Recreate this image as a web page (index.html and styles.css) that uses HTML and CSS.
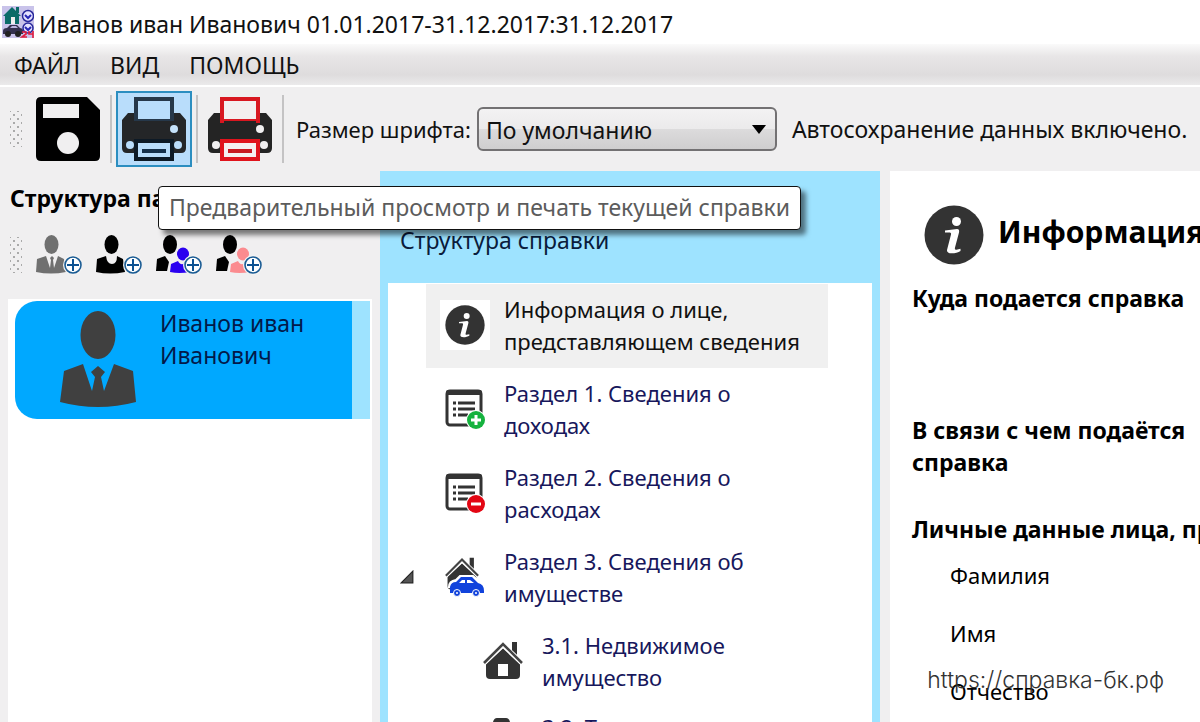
FILE: index.html
```
<!DOCTYPE html>
<html lang="ru">
<head>
  <meta charset="UTF-8">
  <meta name="viewport" content="width=device-width, initial-scale=1.0">
  <title>Справка БК</title>
  <link rel="stylesheet" href="styles.css">
</head>
<body>

<!-- общие значки -->
<svg class="defs" aria-hidden="true">
  <symbol id="i-info" viewBox="0 0 60 60">
    <circle cx="30" cy="30" r="29.500" fill="#333"/>
    <circle cx="32.500" cy="16.500" r="4.500" fill="#fff"/>
    <path d="M21 25.500l12-1.500c2 0 2.500 1.500 2 3.500l-4 15c-.4 1.700 0 2.500 1.500 2.200l4-1v2.300c-4 2.500-14 4-13.500-1l4-15.500c.4-1.600-.5-2-2-2h-4z" fill="#fff"/>
  </symbol>
  <symbol id="i-plus" viewBox="0 0 20 20">
    <circle cx="10" cy="10" r="10" fill="#f3f3f3"/>
    <circle cx="10" cy="10" r="8" fill="#fff" stroke="#1b5c94" stroke-width="1.600"/>
    <path d="M10 4v12M4 10h12" stroke="#0d5292" stroke-width="2"/>
  </symbol>
  <symbol id="i-home" viewBox="0 0 40 40">
    <path d="M29 1h5v14l-5-5z"/>
    <path d="M3 23L20 7l17 16v11q0 4-4 4H7q-4 0-4-4z"/>
    <path d="M1 22L20 4l19 18" fill="none" stroke="#fff" stroke-width="5"/>
    <path d="M1 22L20 3l19 19" fill="none" stroke="#444" stroke-width="2.600"/>
  </symbol>
  <symbol id="i-list" viewBox="0 0 40 40">
    <rect x="2" y="2" width="34" height="34" rx="3" fill="#fff" stroke="#333" stroke-width="3"/>
    <path d="M3 1h32q2 0 2 2v3H1V3q0-2 2-2z" fill="#333"/>
    <path d="M8 14h3M8 20h3M8 26h3M13 14h17M13 20h17M13 26h10" stroke="#333" stroke-width="3"/>
  </symbol>
</svg>

<div class="app">
  <header class="titlebar">
    <svg class="logo" viewBox="0 0 32 32" aria-hidden="true">
      <rect width="32" height="32" fill="#c9c3ea"/>
      <path d="M1 10L10 1l9 9h-2v8H3v-8z" fill="#0b6b68"/>
      <path d="M14 1h3v6h-3z" fill="#0b6b68"/>
      <path d="M9 11h4v7H9z" fill="#eee"/>
      <path d="M1 28v-3q0-3 4-3l3-3h7l3 3q4 0 3 6z" fill="#34314f"/>
      <path d="M8 22l2-2h4l2 2z" fill="#b9b4df"/>
      <circle cx="6" cy="28" r="3" fill="#222"/><circle cx="16" cy="28" r="3" fill="#222"/>
      <circle cx="26" cy="10" r="5.500" fill="#e5e2ff" stroke="#28289a" stroke-width="1.500"/>
      <path d="M23 9l3 3 3-3" fill="none" stroke="#2727b5" stroke-width="2"/>
      <circle cx="26" cy="22" r="5" fill="#e5e2ff" stroke="#28289a" stroke-width="1.500"/>
      <path d="M23 21l3 3 3-3" fill="none" stroke="#2727b5" stroke-width="2"/>
      <path d="M20 26h4v2l-4 3h5M27 25v3h4v-3 7" fill="none" stroke="#e11d3f" stroke-width="1.600"/>
    </svg>
    <span class="window-title">Иванов иван Иванович 01.01.2017-31.12.2017:31.12.2017</span>
  </header>

  <nav class="menubar">
    <button class="menu-item">ФАЙЛ</button>
    <button class="menu-item">ВИД</button>
    <button class="menu-item">ПОМОЩЬ</button>
  </nav>

  <div class="toolbar">
    <span class="grip"></span>
    <button class="tool-btn" aria-label="Сохранить">
      <svg class="tool-icon" viewBox="0 0 64 64">
        <path d="M5 0h46l13 13v46q0 5-5 5H5q-5 0-5-5V5q0-5 5-5z"/>
        <path d="M7 7h36v14H7z" fill="#f0eff0"/>
        <circle cx="32" cy="46" r="11" fill="#f0eff0"/>
      </svg>
    </button>
    <span class="sep"></span>
    <div class="tool-wrap">
      <button class="tool-btn active" aria-label="Печать" aria-describedby="tip">
        <svg class="tool-icon" viewBox="0 0 64 64">
          <path d="M6 16h52l6 7v28q0 5-5 5H5q-5 0-5-5V23z" fill="#242628"/>
          <path d="M14 24V2h36v22z" fill="#b9ddfb" stroke="#26384a" stroke-width="4"/>
          <path d="M10 24h44v14H10z" fill="#242628"/>
          <circle cx="52" cy="32" r="4" fill="#c5e2fa"/>
          <circle cx="8" cy="48" r="4" fill="#b9ddfb"/><circle cx="56" cy="48" r="4" fill="#b9ddfb"/>
          <path d="M14 44h36v18H14z" fill="#b9ddfb" stroke="#0d1a26" stroke-width="4"/>
          <path d="M20 54h24" stroke="#15304a" stroke-width="4"/>
        </svg>
      </button>
      <div class="tooltip" id="tip" role="tooltip">Предварительный просмотр и печать текущей справки</div>
    </div>
    <span class="sep"></span>
    <button class="tool-btn" aria-label="Печать всех справок">
      <svg class="tool-icon" viewBox="0 0 64 64">
        <path d="M6 16h52l6 7v28q0 5-5 5H5q-5 0-5-5V23z" fill="#242424"/>
        <path d="M14 24V2h36v22z" fill="#f3efef" stroke="#d81720" stroke-width="4"/>
        <path d="M16 24h32v14H16z" fill="#242424"/>
        <circle cx="52" cy="32" r="4" fill="#f0eff0"/>
        <circle cx="8" cy="48" r="4" fill="#f0eff0"/><circle cx="56" cy="48" r="4" fill="#f0eff0"/>
        <path d="M14 44h36v18H14z" fill="#f5efef" stroke="#e0131c" stroke-width="4"/>
        <path d="M20 54h24" stroke="#c81820" stroke-width="4"/>
      </svg>
    </button>
    <span class="sep"></span>
    <label class="size-label" for="fontSize">Размер шрифта:</label>
    <div class="select-wrap">
      <select class="size-select" id="fontSize">
        <option>По умолчанию</option>
      </select>
      <svg class="select-arrow" viewBox="0 0 14 9" aria-hidden="true"><path d="M0 0h14L7 9z"/></svg>
    </div>
    <span class="autosave">Автосохранение данных включено.</span>
  </div>

  <main class="panels">
    <section class="folder">
      <h2 class="folder-title">Структура папки</h2>
      <div class="folder-tools">
        <span class="grip small"></span>
        <button class="person-btn" aria-label="Добавить заявителя">
          <svg viewBox="0 0 46 40">
            <g fill="#707070">
              <ellipse cx="15.500" cy="9.500" rx="7" ry="9.500"/>
              <path d="M1 24l9-3 4 12 1-8-1-2 2-2 2 2-1 2 1 8 4-12 6 3 2 13q-15 3-30 0z"/>
            </g>
            <use href="#i-plus" x="27" y="20" width="20" height="20"/>
          </svg>
        </button>
        <button class="person-btn" aria-label="Добавить супругу">
          <svg viewBox="0 0 46 40">
            <ellipse cx="15.500" cy="9.500" rx="7" ry="9.500"/>
            <path d="M1 24l9-3q1 8 6 8t5-8l6 3 2 13q-15 3-29 0z"/>
            <use href="#i-plus" x="27" y="20" width="20" height="20"/>
          </svg>
        </button>
        <button class="person-btn" aria-label="Добавить сына">
          <svg viewBox="0 0 46 40">
            <ellipse cx="14" cy="9.500" rx="7" ry="9.500"/>
            <path d="M1 24l8-3 4 6-2 9H0z"/>
            <g fill="#2a00f0">
              <ellipse cx="27" cy="19" rx="6" ry="6.500"/>
              <path d="M15 29l7-3q2 5 8 2l4 9q-11 2-20 0z"/>
            </g>
            <use href="#i-plus" x="27" y="20" width="20" height="20"/>
          </svg>
        </button>
        <button class="person-btn" aria-label="Добавить дочь">
          <svg viewBox="0 0 46 40">
            <ellipse cx="14" cy="9.500" rx="7" ry="9.500"/>
            <path d="M1 24l8-3 4 6-2 9H0z"/>
            <g fill="#fb8b8f">
              <ellipse cx="27" cy="19" rx="6" ry="6.500"/>
              <path d="M15 29l7-3q2 5 8 2l4 9q-11 2-20 0z"/>
            </g>
            <use href="#i-plus" x="27" y="20" width="20" height="20"/>
          </svg>
        </button>
      </div>
      <div class="folder-list">
        <div class="person-card">
          <svg class="person-photo" viewBox="0 0 76 96" aria-hidden="true">
            <g fill="#404040">
              <ellipse cx="38" cy="24" rx="17.500" ry="24"/>
              <path d="M4 60l19-7 9 27 3-14-4-5 7-6 7 6-4 5 3 14 10-27 19 7 3 31q-38 10-76 0z"/>
            </g>
          </svg>
          <span class="person-name">Иванов иван Иванович</span>
        </div>
      </div>
    </section>

    <section class="report">
      <h2 class="report-title">Структура справки</h2>
      <ul class="tree">
        <li class="tree-item selected">
          <span class="tree-icon boxed"><svg viewBox="0 0 60 60"><use href="#i-info"/></svg></span>
          <span>Информация о лице,<br>представляющем сведения</span>
        </li>
        <li class="tree-item">
          <span class="tree-icon">
            <svg viewBox="0 0 40 40">
              <use href="#i-list"/>
              <circle cx="31" cy="31" r="10" fill="#fff"/>
              <circle cx="31" cy="31" r="9" fill="#15b23e"/>
              <path d="M31 26v10M26 31h10" stroke="#fff" stroke-width="3"/>
            </svg>
          </span>
          <span>Раздел 1. Сведения о<br>доходах</span>
        </li>
        <li class="tree-item">
          <span class="tree-icon">
            <svg viewBox="0 0 40 40">
              <use href="#i-list"/>
              <circle cx="31" cy="31" r="10" fill="#fff"/>
              <circle cx="31" cy="31" r="9" fill="#e30613"/>
              <path d="M26 31h10" stroke="#fff" stroke-width="3"/>
            </svg>
          </span>
          <span>Раздел 2. Сведения о<br>расходах</span>
        </li>
        <li class="tree-item">
          <svg class="expander" viewBox="0 0 12 12" aria-hidden="true"><path d="M1 11L11 1v10z" fill="#555" stroke="#222"/></svg>
          <span class="tree-icon">
            <svg viewBox="0 0 40 40">
              <g fill="#333"><use href="#i-home" x="0" y="0" width="34" height="34"/></g>
              <path d="M4 30q0-6 7-7l4-4h13l6 5q6 1 6 9z" fill="#fff" stroke="#fff" stroke-width="2"/>
              <path d="M5 36v-6q1-5 6-5l5-5h11l6 6q6 1 6 8v2z" fill="#1143dc"/>
              <path d="M14 26l3-3h3v3zM22 23h3l4 3h-7z" fill="#fff"/>
              <circle cx="12" cy="36" r="3.500" fill="#1143dc" stroke="#fff"/>
              <circle cx="31" cy="36" r="3.500" fill="#1143dc" stroke="#fff"/>
              <circle cx="12" cy="36" r="1" fill="#fff"/><circle cx="31" cy="36" r="1" fill="#fff"/>
            </svg>
          </span>
          <span>Раздел 3. Сведения об<br>имуществе</span>
        </li>
        <li class="tree-item sub">
          <span class="tree-icon">
            <svg viewBox="0 0 40 40">
              <g fill="#333"><use href="#i-home"/></g>
              <path d="M15 23h10v12H15z" fill="#fff"/>
            </svg>
          </span>
          <span>3.1. Недвижимое<br>имущество</span>
        </li>
        <li class="tree-item sub">
          <span class="tree-icon tall">
            <svg viewBox="0 0 40 50">
              <path d="M3 40V20l7-16q1-4 4-4h9q3 0 4 4l8 16v20z" fill="#333"/>
              <path d="M8 18l5-11h12l5 11z" fill="#fff"/>
            </svg>
          </span>
          <span>3.2. Транспортные<br>средства</span>
        </li>
      </ul>
    </section>

    <section class="details">
      <div class="details-head">
        <svg class="details-icon" viewBox="0 0 60 60" aria-hidden="true"><use href="#i-info"/></svg>
        <h1 class="details-title">Информация</h1>
      </div>
      <h3 class="question">Куда подается справка</h3>
      <h3 class="question reason">В связи с чем подаётся<br>справка</h3>
      <h3 class="question personal">Личные данные лица, представляющего сведения</h3>
      <p class="field">Фамилия</p>
      <p class="field">Имя</p>
      <p class="field">Отчество</p>
    </section>
  </main>

  <a class="site-link" href="https://справка-бк.рф">https://справка-бк.рф</a>
</div>

</body>
</html>
```
FILE: styles.css
```
* {
  box-sizing: border-box;
}

body {
  margin: 0;
  font-family: "Noto Sans", "Open Sans", sans-serif;
  font-size: 23px;
  line-height: 32px;
  color: #111;
  background: #f0eff0;
}

button, select {
  font: inherit;
  color: inherit;
}

button {
  border: none;
  background: none;
  padding: 0;
}

h1, h2, h3, p, ul {
  margin: 0;
  padding: 0;
}

svg {
  display: block;
}

.defs {
  position: absolute;
  width: 0;
  height: 0;
}

.app {
  position: relative;
  display: flex;
  flex-direction: column;
  height: 100vh;
  overflow: hidden;
  white-space: nowrap;
}

/* заголовок и меню */
.titlebar {
  display: flex;
  gap: 5px;
  padding: 6px 2px 4px;
  background: #fff;
}

.logo {
  width: 32px;
  height: 32px;
}

.window-title {
  padding-top: 2px;
}

.menubar {
  display: flex;
  gap: 30px;
  padding: 5px 14px 4px;
  border-bottom: 2px solid #fff;
  background: linear-gradient(#fafafa, #e8e6e7 30%, #dedcdd 75%, #ebeaeb);
}

/* панель инструментов */
.toolbar {
  display: flex;
  align-items: center;
  height: 84px;
  padding-left: 10px;
  flex-shrink: 0;
}

.grip {
  width: 12px;
  height: 36px;
  margin-right: 8px;
  background-image: radial-gradient(circle, #aaa 1px, transparent 1px), radial-gradient(circle, #aaa 1px, transparent 1px);
  background-size: 8px 8px;
  background-position: 0 0, 4px 4px;
}

.tool-btn {
  padding: 4px;
  border: 2px solid transparent;
}

.tool-btn.active {
  border-color: #2c8ec0;
  background: #b9ddfb;
}

.tool-icon {
  width: 64px;
  height: 64px;
}

.tool-wrap {
  position: relative;
}

.sep {
  width: 2px;
  height: 68px;
  margin: 0 4px;
  background: #c4c3c4;
}

.tooltip {
  position: absolute;
  z-index: 5;
  left: 42px;
  top: 95px;
  padding: 4px 10px 6px;
  border: 1px solid #111;
  border-radius: 4px;
  background: #fff;
  color: #5c5c5c;
  box-shadow: 5px 5px 5px rgba(0, 0, 0, 0.5);
}

.size-label {
  margin-left: 8px;
  font-size: 22px;
}

.select-wrap {
  position: relative;
  width: 300px;
  margin: 0 15px 0 6px;
}

.size-select {
  appearance: none;
  display: block;
  width: 100%;
  height: 44px;
  padding: 2px 7px 0;
  border: 2px solid #737173;
  border-radius: 6px;
  background: linear-gradient(#f3f2f3, #ebeaeb 50%, #dcdbdc 51%, #cfcecf);
}

.select-arrow {
  position: absolute;
  right: 11px;
  top: 18px;
  width: 14px;
  height: 9px;
}

/* три колонки */
.panels {
  flex: 1;
  min-height: 0;
  display: grid;
  grid-template-columns: 372px 500px 1fr;
  column-gap: 8px;
}

.folder {
  display: flex;
  flex-direction: column;
  min-height: 0;
}

.folder-title {
  padding: 11px 10px 21px;
  font-size: 23px;
  color: #000;
}

.folder-tools {
  display: flex;
  align-items: center;
  gap: 14px;
  height: 40px;
  padding-left: 10px;
}

.grip.small {
  margin-right: 0;
}

.person-btn svg {
  width: 46px;
  height: 40px;
}

.folder-list {
  flex: 1;
  margin: 24px 0 0 8px;
  padding: 2px 2px 0 7px;
  background: #fff;
}

.person-card {
  display: flex;
  gap: 24px;
  height: 118px;
  padding: 6px 18px 0 45px;
  border-right: 18px solid #9ee3ff;
  border-radius: 22px 0 0 22px;
  background: #00a8ff;
  color: #03194a;
}

.person-photo {
  width: 76px;
  height: 96px;
  margin-top: 4px;
  flex-shrink: 0;
}

.person-name {
  white-space: normal;
}

.report {
  display: flex;
  flex-direction: column;
  min-height: 0;
  padding: 0 8px;
  background: #9ee3ff;
}

.report-title {
  padding: 53px 12px 27px;
  font-size: 23px;
  font-weight: normal;
  color: #0a1c3c;
}

.tree {
  flex: 1;
  min-height: 0;
  overflow: hidden;
  padding: 1px 44px 0 38px;
  background: #fff;
  font-size: 22px;
  list-style: none;
}

.tree-item {
  position: relative;
  display: flex;
  gap: 14px;
  padding: 9px 14px 11px;
  color: #17175c;
}

.tree-item.selected {
  background: #f0f0f0;
  color: #111;
}

.tree-item.sub {
  padding: 9px 14px 9px 52px;
}

.tree-icon {
  display: flex;
  align-items: center;
  justify-content: center;
  width: 50px;
  height: 50px;
  margin-top: 7px;
  flex-shrink: 0;
}

.tree-icon.boxed {
  background: #fff;
}

.tree-icon svg {
  width: 40px;
  height: 40px;
}

.tree-icon.tall svg {
  height: 50px;
}

.expander {
  position: absolute;
  left: -26px;
  top: 34px;
  width: 14px;
  height: 14px;
}

.details {
  min-width: 0;
  margin-left: 2px;
  padding: 34px 0 0 22px;
  overflow: hidden;
  background: #fff;
  color: #000;
}

.details-head {
  display: flex;
  gap: 14px;
  margin: 0 0 17px 12px;
}

.details-icon {
  width: 60px;
  height: 60px;
  flex-shrink: 0;
}

.details-title {
  padding-top: 7px;
  font-size: 30px;
  line-height: 40px;
}

.question {
  font-size: 23px;
}

.reason {
  margin-top: 100px;
}

.personal {
  margin: 35px 0 14px;
}

.field {
  padding-left: 38px;
  margin-bottom: 26px;
  font-size: 22px;
}

.site-link {
  position: absolute;
  right: 36px;
  bottom: 26px;
  font-family: Inter, Roboto, sans-serif;
  font-weight: 300;
  color: #333;
  text-decoration: none;
}
```
